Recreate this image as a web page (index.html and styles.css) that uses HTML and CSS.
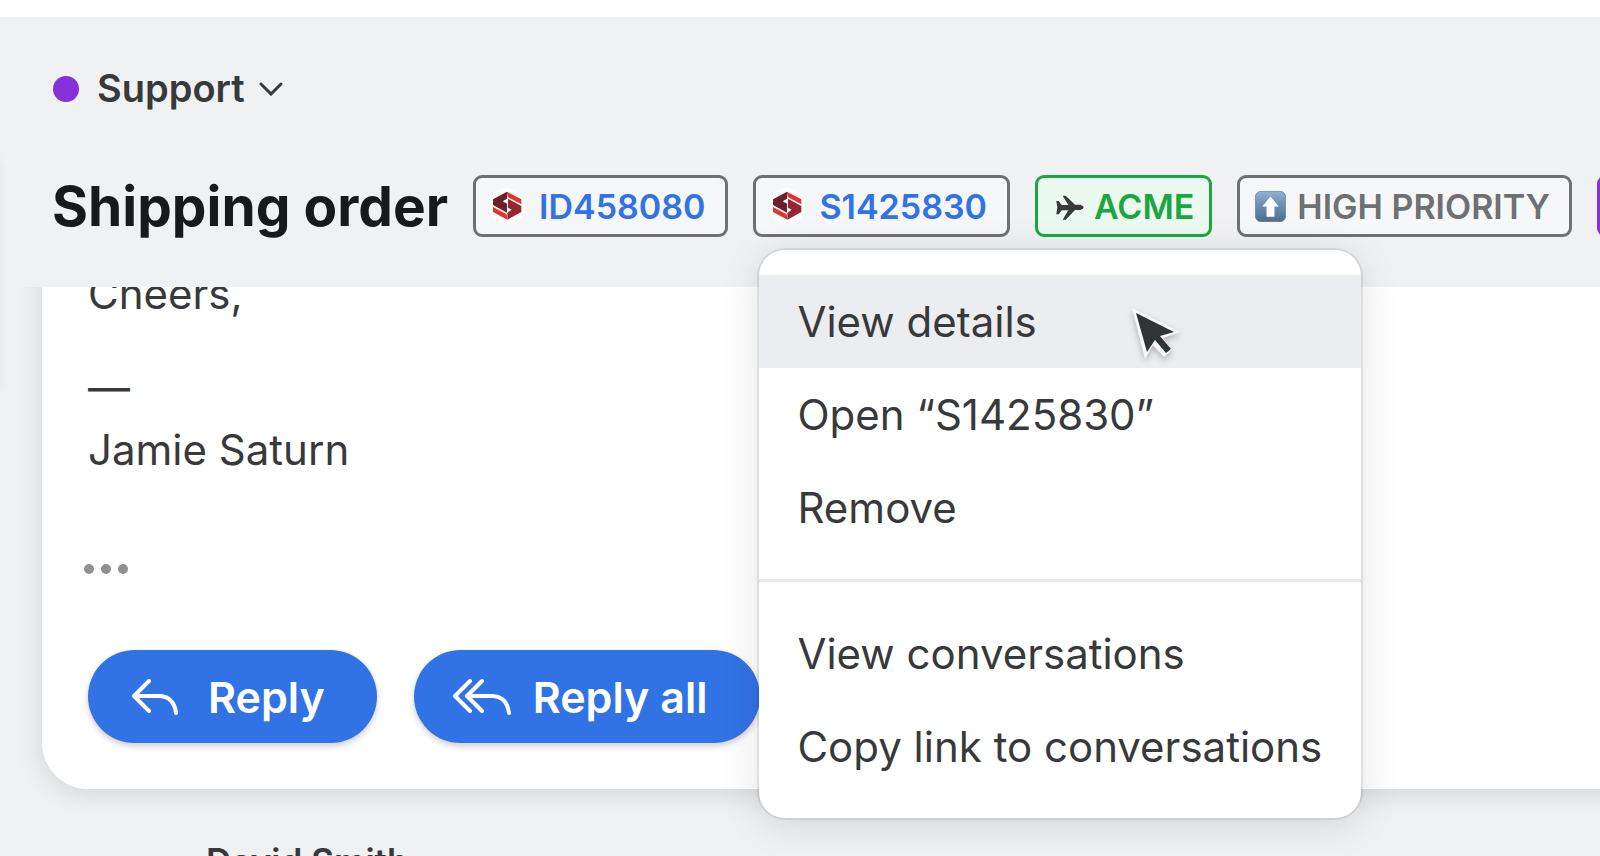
FILE: index.html
```html
<!DOCTYPE html>
<html lang="en">
<head>
  <meta charset="UTF-8" />
  <title>Shipping order - Support</title>
  <link rel="stylesheet" href="styles.css">
</head>
<body>

  <!-- Header -->
  <header class="header">
    <button class="inbox">
      <span class="inbox-dot"></span>
      Support
      <svg class="chevron" viewBox="0 0 24 14"><path d="M2 2l10 10L22 2"></path></svg>
    </button>

    <div class="title-row">
      <h1>Shipping order</h1>
      <button class="tag tag-link">
        <svg class="tag-logo" viewBox="0 0 108 108">
          <circle cx="54" cy="54" r="54" fill="#fff"></circle>
          <path fill="#df3531" d="M54 11l43 23v15L56 27zM55 95L12 72V57l41 22z"></path>
          <path fill="#6e1f2d" d="M54 11v21L41 40l13 7v27L12 51V34z"></path>
          <path fill="#96262f" d="M55 95V74l13-9-11-6V32l40 22v18z"></path>
        </svg>
        ID458080
      </button>

      <!-- Tag with its open menu -->
      <div class="tag-wrap">
        <button class="tag tag-link" aria-expanded="true">
          <svg class="tag-logo" viewBox="0 0 108 108">
            <circle cx="54" cy="54" r="54" fill="#fff"></circle>
            <path fill="#df3531" d="M54 11l43 23v15L56 27zM55 95L12 72V57l41 22z"></path>
            <path fill="#6e1f2d" d="M54 11v21L41 40l13 7v27L12 51V34z"></path>
            <path fill="#96262f" d="M55 95V74l13-9-11-6V32l40 22v18z"></path>
          </svg>
          S1425830
        </button>
        <div class="menu">
          <button class="menu-item active">View details</button>
          <button class="menu-item">Open “S1425830”</button>
          <button class="menu-item">Remove</button>
          <hr>
          <button class="menu-item">View conversations</button>
          <button class="menu-item">Copy link to conversations</button>
          <svg class="cursor" viewBox="0 0 52 54">
            <path d="M3 3l48 24-17 6 9 12-8 7-11-12-8 14z" fill="#f8f8f9"></path>
            <path d="M7 8l38 19-14 4 11 13-5 4-11-13-8 12z" fill="#2f3437"></path>
          </svg>
        </div>
      </div>

      <button class="tag tag-green">
        <svg class="tag-plane" viewBox="0 0 84 78"><path d="M1 18h7l9 12h20L20 2h9l28 27h16q10 3 10 8t-10 8H57L29 74h-9l17-28H17L8 58H1l3-21z"></path></svg>
        ACME
      </button>
      <button class="tag">
        <svg class="tag-up" viewBox="0 0 94 94">
          <defs>
            <linearGradient id="up-fill" x1="0" y1="0" x2="0" y2="1">
              <stop offset="0" stop-color="#8fb3d3"></stop>
              <stop offset="0.4" stop-color="#6f93b5"></stop>
              <stop offset="1" stop-color="#526c89"></stop>
            </linearGradient>
          </defs>
          <rect x="1" y="1" width="92" height="92" rx="17" fill="url(#up-fill)" stroke="#587a9c" stroke-width="2"></rect>
          <path d="M47 17l25 30H59v31H35V47H22z" fill="#fff"></path>
        </svg>
        HIGH PRIORITY
      </button>
      <button class="tag tag-purple"></button>
    </div>
  </header>

  <!-- Conversation -->
  <main>
    <article class="message">
      <p>Cheers,</p>
      <p>—<br>Jamie Saturn</p>
      <button class="more" aria-label="Show quoted text">
        <svg viewBox="0 0 44 10"><circle cx="5" cy="5" r="5"></circle><circle cx="22" cy="5" r="5"></circle><circle cx="39" cy="5" r="5"></circle></svg>
      </button>
      <div class="actions">
        <button class="btn btn-reply">
          <svg viewBox="0 0 48 38"><path d="M18 3L3 18l15 15M3 18h26q14 1 16 17"></path></svg>
          Reply
        </button>
        <button class="btn btn-all">
          <svg viewBox="0 0 60 38"><path d="M18 3L3 18l15 15M30 3L15 18l15 15M15 18h26q14 1 16 17"></path></svg>
          Reply all
        </button>
      </div>
    </article>
    <div class="next-sender">David Smith</div>
  </main>

</body>
</html>
```
FILE: styles.css
```css
:root {
  --bg: #f0f1f3;
  --text: #38393b;
  --blue: #3173e4;
  --gray: #6f7072;
  --green: #1ba641;
}

* {
  box-sizing: border-box;
  margin: 0;
  padding: 0;
}
body {
  background: var(--bg);
  color: var(--text);
  font-family: Inter, "Liberation Sans", sans-serif;
  font-size: 42px;
  height: 100vh;
  overflow: hidden;
}
/* shadow of the panel to the left */
body::before {
  content: "";
  position: fixed;
  z-index: 3;
  top: 160px;
  left: -20px;
  width: 20px;
  height: 230px;
  box-shadow: 0 0 8px rgba(0,0,0,0.06);
}
button {
  background: none;
  border: none;
  color: inherit;
  font: inherit;
  cursor: pointer;
}

/* Header */
.header {
  position: relative;
  z-index: 2;
  background: var(--bg);
  border-top: 17px solid #fff;
  padding: 48px 0 50px 52px;
}
.inbox {
  display: flex;
  align-items: center;
  font-size: 38px;
  font-weight: 600;
  line-height: 46px;
}
.inbox-dot {
  width: 26px;
  height: 26px;
  margin: 1px 18px 0 1px;
  border-radius: 50%;
  background: #8530d8;
}
.chevron {
  width: 24px;
  height: 14px;
  margin: 2px 0 0 14px;
}
.chevron path {
  fill: none;
  stroke: var(--text);
  stroke-width: 3;
  stroke-linecap: round;
}
.title-row {
  display: flex;
  align-items: center;
  gap: 25px;
  margin-top: 64px;
  white-space: nowrap;
}
h1 {
  color: #18191a;
  font-size: 55px;
  font-weight: 700;
  line-height: 62px;
}

/* Tags */
.tag {
  display: flex;
  flex-shrink: 0;
  align-items: center;
  height: 62px;
  padding: 0 19px 0 15px;
  border: 3px solid var(--gray);
  border-radius: 9px;
  background: #f6f7f9;
  color: var(--gray);
  font-size: 34px;
  font-weight: 600;
}
.tag-link {
  padding: 0 20px 0 13px;
  color: var(--blue);
}
.tag-logo {
  width: 36px;
  height: 36px;
  margin-right: 14px;
}
.tag-green {
  padding-right: 15px;
  border-color: var(--green);
  background: #ebf9f0;
  color: var(--green);
}
.tag-plane {
  width: 28px;
  height: 26px;
  margin: 4px 10px 0 3px;
  fill: var(--text);
}
.tag-up {
  width: 31px;
  height: 31px;
  margin-right: 11px;
}
.tag-purple {
  width: 140px;
  border-color: #8530d8;
}
.tag-wrap {
  position: relative;
}

/* Tag menu */
.menu {
  position: absolute;
  top: 75px;
  left: 6px;
  width: 602px;
  padding: 25px 0;
  border-radius: 26px;
  background: #fff;
  box-shadow: 0 0 0 2px rgba(0,0,0,0.08), 0 6px 40px rgba(0,0,0,0.12);
}
.menu-item {
  display: block;
  width: 100%;
  height: 93px;
  padding: 0 38px;
  text-align: left;
}
.menu-item.active {
  background: #ecedf1;
}
.menu hr {
  margin: 25px 0;
  border: none;
  border-top: 3px solid #e8e8ec;
}
.cursor {
  position: absolute;
  top: 55px;
  left: 370px;
  width: 52px;
  height: 54px;
  filter: drop-shadow(0 3px 3px rgba(0,0,0,0.25));
}

/* Message */
.message {
  margin: -48px -40px 0 42px;
  padding: 24px 46px 46px;
  border-bottom-left-radius: 46px;
  background: #fff;
  box-shadow: 0 4px 28px rgba(0,0,0,0.12);
}
.message p {
  margin-bottom: 32px;
  line-height: 62px;
}
.more {
  display: block;
  height: 32px;
  margin: 72px 0 65px -4px;
}
.more svg {
  display: block;
  width: 44px;
  height: 10px;
  fill: #909193;
}
.actions {
  display: flex;
  gap: 37px;
}
.btn {
  display: flex;
  align-items: center;
  height: 93px;
  border-radius: 47px;
  background: var(--blue);
  color: #fff;
  font-size: 43px;
  font-weight: 600;
  box-shadow: 0 3px 6px rgba(0,0,0,0.2);
}
.btn svg {
  height: 38px;
  fill: none;
  stroke: #fff;
  stroke-width: 4;
  stroke-linecap: round;
  stroke-linejoin: round;
}
.btn-reply {
  padding: 0 52px 0 43px;
}
.btn-reply svg {
  width: 48px;
  margin-right: 29px;
}
.btn-all {
  padding: 0 53px 0 38px;
}
.btn-all svg {
  width: 60px;
  margin-right: 21px;
}
.next-sender {
  margin: 49px 0 0 206px;
  font-size: 35px;
  font-weight: 600;
  line-height: 46px;
}
```
